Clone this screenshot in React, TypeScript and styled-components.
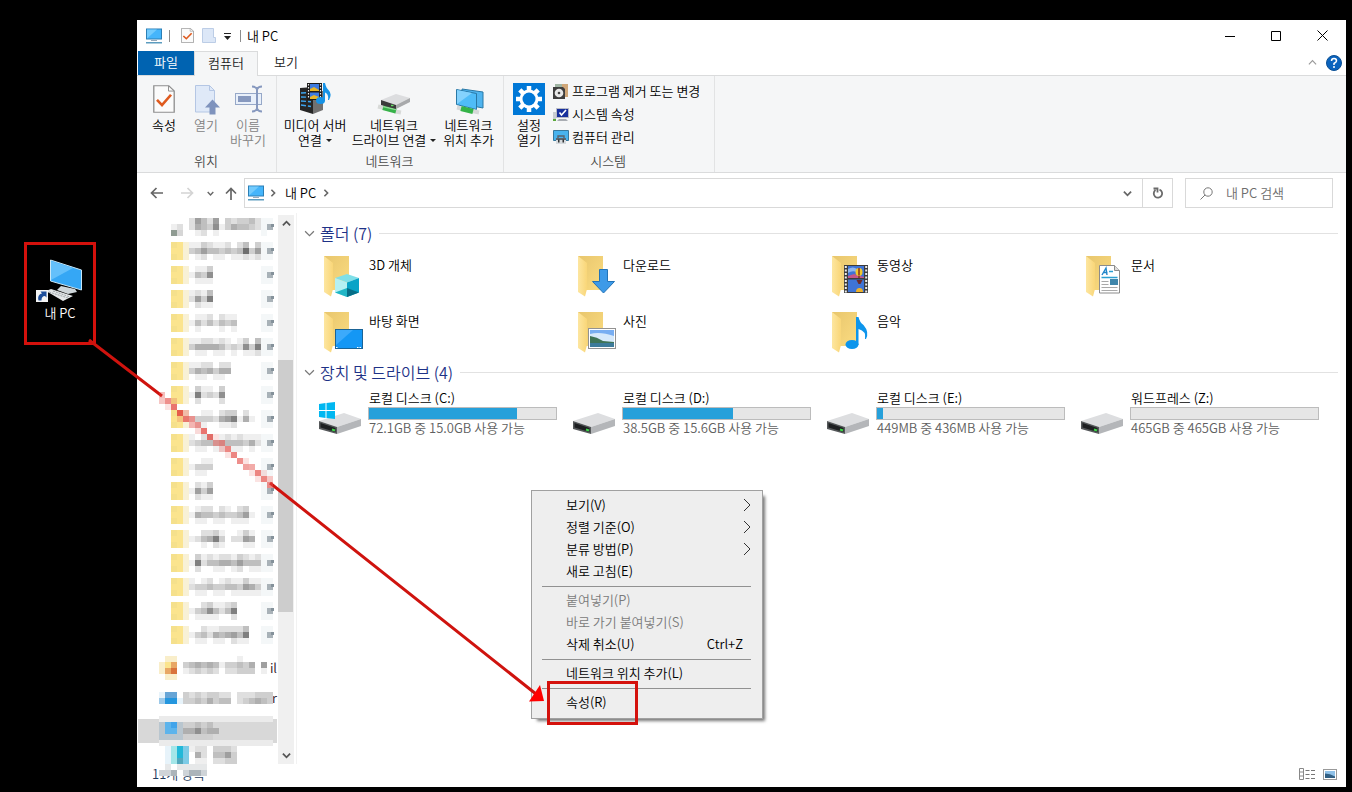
import React from 'react';
import styled, { createGlobalStyle } from 'styled-components';

const GlobalStyle = createGlobalStyle`
  * { box-sizing: border-box; }
  body {
    margin: 0;
    background: #000;
    color: #000;
    font: 350 13px/18px "Noto Sans CJK KR", "Noto Sans", sans-serif;
  }
  button, input { font: inherit; color: inherit; }
  button { border: 0; padding: 0; background: none; }
  ul { list-style: none; margin: 0; padding: 0; }
  svg { display: block; flex: none; }
`;

/* ---------- shell ---------- */

const Desktop = styled.div`
  position: relative;
  min-height: 100vh;
  display: flex;
  align-items: stretch;
  background: #000;
  overflow: hidden;
`;

const DesktopColumn = styled.div`
  width: 137px;
  flex: none;
  padding: 256px 17px 0 0;
`;

const Shortcut = styled.button`
  width: 100%;
  display: flex;
  flex-direction: column;
  align-items: center;
  color: #fff;
`;

const Explorer = styled.main`
  position: relative;
  flex: 1;
  min-width: 0;
  margin: 20px 6px 5px 0;
  display: flex;
  flex-direction: column;
  background: #fff;
`;

/* ---------- title bar ---------- */

const TitleBar = styled.header`
  height: 31px;
  display: flex;
  align-items: center;
  padding: 0 1px 0 8px;
`;

const QuickTools = styled.div`
  display: flex;
  align-items: center;
  gap: 8px;
`;

const Tick = styled.span<{ $last?: boolean }>`
  width: 1px;
  height: 12px;
  margin: 0 3px 0 ${p => (p.$last ? 1 : -2)}px;
  background: #8d8d8d;
`;

const Title = styled.h1`
  margin: 0 auto 0 3px;
  font-size: 13px;
  font-weight: 350;
`;

const WindowButton = styled.button`
  width: 46px;
  height: 30px;
  display: flex;
  align-items: center;
  justify-content: center;
`;

/* ---------- ribbon ---------- */

const TabRow = styled.nav`
  height: 25px;
  display: flex;
  align-items: center;
  padding: 0 4px 0 1px;
  box-shadow: inset 0 -1px #dadbdc;
`;

const Tab = styled.button<{ $kind: 'file' | 'active' | 'plain' }>`
  width: ${p => (p.$kind === 'active' ? 64 : 56)}px;
  height: ${p => (p.$kind === 'active' ? 25 : 24)}px;
  align-self: flex-start;
  padding-bottom: 3px;
  line-height: 20px;
  color: ${p => (p.$kind === 'file' ? '#fff' : '#222')};
  background: ${p => ({ file: '#0063b1', active: '#f5f6f7', plain: 'transparent' })[p.$kind]};
  border: solid #dadbdc;
  border-width: ${p => (p.$kind === 'active' ? '1px 1px 0' : '0')};
`;

const TabTools = styled.div`
  margin-left: auto;
  padding-bottom: 2px;
  display: flex;
  align-items: center;
  gap: 9px;
`;

const Ribbon = styled.section`
  height: 97px;
  display: flex;
  background: #f5f6f7;
  border-bottom: 1px solid #dadbdc;
`;

const Group = styled.div<{ $pad: string }>`
  display: grid;
  grid-template-rows: 1fr 22px;
  justify-items: center;
  padding: ${p => p.$pad};
  position: relative;
  border-right: 1px solid #e2e3e4;
`;

const GroupBody = styled.div`
  display: flex;
  align-items: flex-start;
`;

const GroupLabel = styled.span`
  line-height: 21px;
  color: #4a4a4a;
`;

const BigButton = styled.button<{ $width: number }>`
  width: ${p => p.$width}px;
  padding-top: 7px;
  display: flex;
  flex-direction: column;
  align-items: center;
  gap: 2px;
  line-height: 15px;
  white-space: nowrap;
  &:disabled { color: #838383; }
`;

const DropMark = styled.span`
  display: inline-block;
  margin-left: 4px;
  vertical-align: 3px;
  border: 3px solid transparent;
  border-top-color: #222;
  border-bottom: 0;
`;

const SmallList = styled.div`
  display: flex;
  flex-direction: column;
  padding-top: 3px;
`;

const SmallButton = styled.button`
  height: 23px;
  display: flex;
  align-items: center;
  gap: 3px;
  padding: 0 8px 0 3px;
  white-space: nowrap;
`;

/* ---------- address row ---------- */

const AddressRow = styled.div`
  height: 40px;
  display: flex;
  align-items: center;
  padding: 0 13px 0 5px;
`;

const NavButton = styled.button<{ $width: number }>`
  width: ${p => p.$width}px;
  height: 30px;
  display: flex;
  align-items: center;
  justify-content: center;
`;

const AddressBox = styled.div`
  flex: 1;
  height: 30px;
  display: flex;
  align-items: center;
  border: 1px solid #d9d9d9;
`;

const Crumb = styled.button<{ $root?: boolean }>`
  display: flex;
  align-items: center;
  gap: ${p => (p.$root ? 4 : 6)}px;
  margin-left: ${p => (p.$root ? 2 : 8)}px;
`;

const Spacer = styled.span`
  flex: 1;
`;

const BoxButton = styled.button<{ $split?: boolean }>`
  width: 30px;
  height: 28px;
  display: flex;
  align-items: center;
  justify-content: center;
  border-left: ${p => (p.$split ? '1px solid #d9d9d9' : '0')};
`;

const SearchBox = styled.label`
  width: 148px;
  height: 30px;
  margin-left: 12px;
  display: flex;
  align-items: center;
  gap: 13px;
  padding-left: 14px;
  border: 1px solid #d9d9d9;
  input {
    width: 100px;
    border: 0;
    padding: 0;
    outline: 0;
    background: none;
  }
  input::placeholder { color: #6d6d6d; opacity: 1; }
`;

/* ---------- content ---------- */

const Content = styled.div`
  flex: 1;
  display: flex;
  min-height: 0;
`;

const Tree = styled.ul`
  width: 141px;
  padding-top: 5px;
  overflow: hidden;
`;

const TreeRow = styled.li<{ $height: number; $selected?: boolean }>`
  height: ${p => p.$height}px;
  display: flex;
  align-items: flex-end;
  background: ${p => (p.$selected ? 'linear-gradient(#d8d8d8, #d8d8d8) 1px 15px / 139px 24px no-repeat' : 'none')};
  svg { position: relative; z-index: 1; }
`;

const TreeTail = styled.span<{ $line: number }>`
  width: 16px;
  margin-left: -16px;
  line-height: ${p => p.$line}px;
  text-align: right;
  color: #2b1424;
`;

const Scrollbar = styled.div`
  width: 16px;
  margin-top: 2px;
  display: grid;
  grid-template-rows: 17px 128fr 251fr 135fr 17px;
  background: #f0f0f0;
`;

const ScrollArrow = styled.button<{ $row: number }>`
  grid-row: ${p => p.$row};
  display: flex;
  align-items: center;
  justify-content: center;
`;

const Thumb = styled.div`
  grid-row: 3;
  width: 15px;
  background: #cdcdcd;
`;

const Pane = styled.section`
  position: relative;
  flex: 1;
  min-width: 0;
  margin-left: 2px;
  padding: 10px 8px 0 7px;
  border-left: 1px solid #f2f2f2;
`;

const SectionHead = styled.h2`
  margin: 0 0 6px;
  display: flex;
  align-items: center;
  gap: 5px;
  font-size: 16px;
  line-height: 20px;
  font-weight: 350;
  color: #1e3287;
  &::after {
    content: '';
    flex: 1;
    height: 1px;
    margin-left: 2px;
    background: #e2e2e2;
  }
`;

const Tiles = styled.ul`
  display: grid;
  grid-template-columns: repeat(auto-fill, 254px);
  padding-left: 11px;
  margin-bottom: 1px;
`;

const Tile = styled.li`
  height: 56px;
  display: flex;
  gap: 4px;
  padding-top: 2px;
  line-height: 27px;
`;

const Drive = styled.li`
  display: flex;
  gap: 3px;
`;

const DriveInfo = styled.div`
  width: 189px;
`;

const DriveName = styled.div`
  line-height: 19px;
  padding-left: 1px;
`;

const DriveMeta = styled(DriveName)`
  line-height: 15px;
  color: #5f5f5f;
  white-space: nowrap;
`;

const Meter = styled.div`
  height: 13px;
  border: 1px solid #bcbcbc;
  background: #e6e6e6;
`;

const MeterFill = styled.div`
  height: 100%;
  background: #26a0da;
`;

/* ---------- context menu ---------- */

const Menu = styled.div`
  position: absolute;
  left: 234px;
  top: 277px;
  width: 232px;
  padding: 3px 0 5px;
  background: #eee;
  border: 1px solid #a0a0a0;
  box-shadow: 4px 4px 3px -2px #777;
`;

const MenuItem = styled.button`
  width: 100%;
  height: 22px;
  display: flex;
  align-items: center;
  justify-content: space-between;
  padding: 0 19px 0 34px;
  &:disabled { color: #7a7a7a; }
`;

const MenuArrow = styled.svg`
  margin-right: -8px;
`;

const Divider = styled.hr`
  height: 1px;
  margin: 4px 11px 2px 10px;
  border: 0;
  background: #919191;
`;

/* ---------- status bar ---------- */

const StatusBar = styled.footer`
  height: 23px;
  display: flex;
  align-items: center;
  justify-content: space-between;
  padding: 0 9px 4px 15px;
  position: relative;
  color: #1e395b;
`;

const StatusMask = styled.svg`
  position: absolute;
  left: 22px;
  top: 0;
`;

const ViewModes = styled.div`
  display: flex;
  gap: 7px;
`;

const Annotation = styled.svg`
  position: absolute;
  left: 0;
  top: 0;
  z-index: 2;
  pointer-events: none;
`;

/* ---------- icons ---------- */

const PcIcon = () => (
  <svg width="18" height="16" viewBox="0 0 18 16">
    <rect x="1" y=".5" width="16" height="11" fill="#2c7fb5" />
    <rect x="2" y="1.500" width="14" height="9" fill="#45b5fb" />
    <path d="M2 10.500L12 1.500H2z" fill="#73cbfd" />
    <path d="M6 12h6v1H6z" fill="#9ab" />
    <path d="M1 14h16v1.500H1z" fill="#5c9cbf" />
  </svg>
);

const CheckDoc = ({ w, h }: { w: number; h: number }) => (
  <svg width={w} height={h} viewBox="0 0 22 30" preserveAspectRatio="none">
    <path d="M.8.8h15l5.400 5.500v22.900H.8z" fill="#fbfbfb" stroke="#8e8e8e" strokeWidth="1.300" />
    <path d="M15.500 1v5.500h5.500" fill="none" stroke="#8e8e8e" />
    <path d="M4 16l5 5.500 9-11" fill="none" stroke="#df5a1e" strokeWidth="2.600" />
  </svg>
);

const BlankDoc = () => (
  <svg width="14" height="15" viewBox="0 0 14 15">
    <path d="M.5.500h11v9h2v5H.5z" fill="#dce7f7" stroke="#bccde6" />
  </svg>
);

const Chevron = ({ d, size = 9, color = '#666', width = 1.6 }: { d: string; size?: number; color?: string; width?: number }) => (
  <svg width={size} height={size} viewBox="0 0 10 10" fill="none" stroke={color} strokeWidth={width}>
    <path d={d} />
  </svg>
);
const DOWN = 'M1 3l4 4 4-4';
const UP = 'M1 7l4-4 4 4';
const RIGHT = 'M3 1l4 4-4 4';

const OpenIcon = () => (
  <svg width="28" height="32" viewBox="0 0 28 32">
    <path d="M3.500 2.500h14l5 5V29h-19z" fill="#dfe9f8" stroke="#b4c6e4" />
    <path d="M17.500 2.500v5h5" fill="none" stroke="#b4c6e4" />
    <path d="M20.500 16.500l7.500 8h-4.500v7h-6v-7h-4.500z" fill="#7f93bd" />
  </svg>
);

const RenameIcon = () => (
  <svg width="30" height="32" viewBox="0 0 30 32" fill="none" stroke="#96a8c8">
    <rect x="2.500" y="10.500" width="26" height="11" fill="#e9f0fa" />
    <rect x="5" y="13" width="13" height="6" fill="#8799bf" stroke="none" />
    <path d="M24 4v24M19 3.500q4 0 5 3 1-3 5-3M19 28.500q4 0 5-3 1 3 5 3" strokeWidth="2" stroke="#8799bf" />
  </svg>
);

const MediaIcon = () => (
  <svg width="34" height="32" viewBox="0 0 34 32">
    <path d="M2 5l13-1v27L2 27z" fill="#262626" />
    <path d="M15 6l10 2v19l-10 4z" fill="#717171" />
    <path d="M3 10l10-.5M3 14l10 .2M3 18l10 .8M3 22l10 1.500" stroke="#3da5ef" strokeWidth="1.400" strokeDasharray="5 2" />
    <rect x="9" y="0" width="15" height="17" fill="#1b1b1b" />
    <path d="M12 1h9v7h-9zM12 9.500h9v6.500h-9z" fill="#3e7be0" />
    <path d="M12 6l4-2 5 3v1h-9zM12 14l4-2 5 2v2h-9z" fill="#e8b628" />
    <path d="M10.500 1v15M22.500 1v15" stroke="#eee" strokeWidth="1.200" strokeDasharray="1.500 1.500" />
    <ellipse cx="22.500" cy="17.500" rx="4.500" ry="3.500" fill="#1793e6" />
    <path d="M25 0h2q1 5 3.500 7 4 4 .5 10h-1q1-6-3-7.500V18h-2z" fill="#1793e6" />
  </svg>
);

const NetDriveIcon = () => (
  <svg width="34" height="32" viewBox="0 0 34 32">
    <path d="M1 23.500l6 1.500M18 28.500l6 1" stroke="#d8dad8" strokeWidth="4" />
    <path d="M6 24.500l13 3.500" stroke="#37b24a" strokeWidth="5" />
    <path d="M6 23.500l13 3" stroke="#8fdc96" strokeWidth="1.400" />
    <path d="M4 17L19 11l14 4-14 7z" fill="#dcdddf" />
    <path d="M4 17l15 5v4L4 22z" fill="#3b3b3b" />
    <path d="M19 22l14-7v4l-14 7z" fill="#a8a9ab" />
    <path d="M14 22.500h2.500" stroke="#67e067" strokeWidth="1.400" />
  </svg>
);

const NetPlaceIcon = () => (
  <svg width="30" height="32" viewBox="0 0 30 32">
    <path d="M8 6l21 3v16l-21-4z" fill="#4fb4ef" stroke="#2978a6" />
    <path d="M2.500 6.500l20 4v16l-20-5z" fill="#4fbcf8" stroke="#2978a6" />
    <path d="M3 21L18 10 3 7z" fill="#84d2fd" />
    <path d="M3 24.500l22 5" stroke="#d5d8d8" strokeWidth="4" />
    <path d="M7 25.500l12 3" stroke="#34b348" strokeWidth="5" />
  </svg>
);

const GearIcon = () => (
  <svg width="32" height="32" viewBox="0 0 32 32">
    <rect width="32" height="32" fill="#0078d7" />
    <g stroke="#fff" strokeWidth="4.500">
      <path d="M16 3v26M3 16h26M6.800 6.800l18.400 18.400M25.200 6.800L6.800 25.200" />
    </g>
    <circle cx="16" cy="16" r="9.500" fill="#fff" />
    <circle cx="16" cy="16" r="6.500" fill="#0078d7" />
  </svg>
);

const ProgramsIcon = () => (
  <svg width="16" height="16" viewBox="0 0 16 16">
    <path d="M2 1h12v12H2z" fill="#9fb4a3" />
    <path d="M9 1h6v13H9z" fill="#d0a779" />
    <path d="M0 4h10l2 2v10H0z" fill="#3e3e3e" />
    <circle cx="6" cy="10" r="4.300" fill="#e8e8e8" />
    <circle cx="6" cy="10" r="1.300" fill="#444" />
  </svg>
);

const SystemIcon = () => (
  <svg width="16" height="16" viewBox="0 0 16 16">
    <path d="M0 6h3v9H0z" fill="#c9cdd1" />
    <path d="M0 13h3v2H0z" fill="#5ba93c" />
    <path d="M3.500 2.500h12v9h-12z" fill="#18309c" stroke="#b9bcc6" />
    <path d="M6 13h7l2 2H4z" fill="#a9adb3" />
    <path d="M6.500 6.500l2 2.500L13 4" fill="none" stroke="#fff" strokeWidth="1.600" />
  </svg>
);

const ManageIcon = () => (
  <svg width="16" height="16" viewBox="0 0 16 16">
    <path d="M.5 1.500h15v10H.5z" fill="#48b3ee" stroke="#37789d" />
    <path d="M5 7h6v3H5z" fill="none" stroke="#59636c" strokeWidth="1.400" />
    <path d="M3 9h10v6H3z" fill="#5d6770" />
    <path d="M3 11h10v4H3z" fill="#d5dade" />
    <path d="M5 10.500h1.500v3H5zM9.500 10.500H11v3H9.500z" fill="#333" />
  </svg>
);

const Folder = ({ children }: { children?: React.ReactNode }) => (
  <svg width="50" height="50" viewBox="0 0 50 50">
    <defs>
      <linearGradient id="fold" x1="0" y1="0" x2="1" y2="1">
        <stop offset="0" stopColor="#e8c66d" />
        <stop offset="1" stopColor="#fbdc81" />
      </linearGradient>
      <linearGradient id="flap" x1="0" y1="0" x2="1" y2="0">
        <stop offset="0" stopColor="#fde6a0" />
        <stop offset="1" stopColor="#f9d678" />
      </linearGradient>
    </defs>
    <path d="M9 5h25v34H12z" fill="url(#fold)" />
    <path d="M9 5l9 7v26l-2 7.500L9 41z" fill="url(#flap)" />
    {children}
  </svg>
);

const folders: [string, React.ReactNode][] = [
  ['3D 개체', (
    <g>
      <path d="M32 23l12 4-12 4.500L20 27z" fill="#7fdfe8" />
      <path d="M20 27l12 4.500V46l-12-4.500z" fill="#b5f0f2" />
      <path d="M44 27l-12 4.500V46l12-4.500z" fill="#08a3c7" />
      <path d="M20 41.500l12-4.500v9z" fill="#21b6c6" />
      <path d="M44 41.500L32 37v9z" fill="#066e87" />
    </g>
  )],
  ['다운로드', <path d="M30.500 18.500h8v12h7L34.500 42l-11-11.500h7z" fill="#3d9ae8" stroke="#2374b8" />],
  ['동영상', (
    <g>
      <rect x="21" y="14" width="24" height="28" fill="#3c3c3c" />
      <path d="M25 15h16v12H25zM25 28.500h16V41H25z" fill="#3f74d6" />
      <path d="M25 18q5-3 9 0v3q-5-2-9 1z" fill="#8fb6ee" />
      <path d="M25 25l6-2 10 3v1H25z" fill="#c4568a" />
      <path d="M22.800 15v27M43.200 15v27" stroke="#eee" strokeWidth="2" strokeDasharray="2 1.500" />
      <ellipse cx="36" cy="21" rx="3.500" ry="4" fill="#f1c62c" />
      <path d="M36 17v7.500M35 26h2" stroke="#8b3a1c" strokeWidth="1.600" />
      <path d="M33.500 29h6l-2 4h-2z" fill="#6e2b2b" />
      <path d="M33 41a3.500 4 0 0 1 7 0z" fill="#efb22b" />
    </g>
  )],
  ['문서', (
    <g>
      <path d="M22.500 14.500h15l5 5V42h-20z" fill="#fff" stroke="#8b8b8b" />
      <path d="M37.500 14.500v5h5" fill="#ddd" stroke="#8b8b8b" />
      <path d="M25 24l4-7 1 7M26.500 21.500h4" fill="none" stroke="#1f85c9" strokeWidth="1.400" />
      <path d="M32 20.500h4M24.500 26.500h16" stroke="#2aa0d2" strokeWidth="1.300" />
      <path d="M24.500 30.500h7M24.500 33.500h7M24.500 36.500h16M24.500 39.500h16" stroke="#a9a9a9" />
      <path d="M33 28h8v6h-8z" fill="#3f86ab" />
    </g>
  )],
  ['바탕 화면', (
    <g>
      <rect x="20.500" y="22.500" width="27" height="19" fill="#1497f5" stroke="#1a6396" />
      <path d="M21 38L38 23H21z" fill="#3caafb" />
      <path d="M21 40.500h1.500M42 40.500h5" stroke="#fff" strokeDasharray="1.500 1" />
    </g>
  )],
  ['사진', (
    <g>
      <rect x="19.500" y="21.500" width="27" height="20" fill="#fff" stroke="#929292" />
      <path d="M21 23h24v17H21z" fill="#78aef2" />
      <path d="M21 27q10-3 24 2v6H21z" fill="#d6e9fb" />
      <path d="M21 29q7 1 13 5l11 1v1H21z" fill="#3f7457" />
      <path d="M21 36h24v4H21z" fill="#3d7b9a" />
    </g>
  )],
  ['음악', (
    <g>
      <ellipse cx="29" cy="37.500" rx="6.500" ry="4.500" fill="#0d95ec" />
      <path d="M33 10h2.500q1 5 5 8 6 7 2.500 14h-1q1.500-8-6.500-10v16H33z" fill="#0d95ec" />
    </g>
  )],
];

const DriveIcon = ({ system }: { system?: boolean }) => (
  <svg width="50" height="50" viewBox="0 0 50 50">
    <path d="M4 33l25-8 17 6-24 8z" fill="#dddee0" />
    <path d="M4 33l18 6v7L4 41z" fill="#55585a" />
    <path d="M5.500 35l15 5v4L5.500 39.500z" fill="#1d1f21" />
    <path d="M22 39l24-8v7l-24 8z" fill="#b4b6b9" />
    <path d="M17 41.500l3 1" stroke="#3fd64a" strokeWidth="2" />
    {system && (
      <path d="M4 16l6.500-1v7H4zM11.500 15l8.500-1v8h-8.500zM4 23h6.500v7L4 29zM11.500 23H20v8l-8.500-1z" fill="#00b7f1" />
    )}
  </svg>
);

const drives = [
  { name: '로컬 디스크 (C:)', meta: '72.1GB 중 15.0GB 사용 가능', used: 79, system: true },
  { name: '로컬 디스크 (D:)', meta: '38.5GB 중 15.6GB 사용 가능', used: 59 },
  { name: '로컬 디스크 (E:)', meta: '449MB 중 436MB 사용 가능', used: 3 },
  { name: '워드프레스 (Z:)', meta: '465GB 중 465GB 사용 가능', used: 0 },
];

/* ---------- pixelated tree labels ---------- */

const CELL = 6;
const tones: Record<string, string> = {
  a: '#f5e08c', b: '#fbe48e', c: '#f8f1d6', p: '#f4f7f8', q: '#a9b2b8',
  o: '#e8a765', r: '#d9733c', t: '#f9eeca', u: '#9cc9e9', v: '#2496de', w: '#67a5d6',
  s: '#5cb4ec', x: '#41a4ea', y: '#e7f3fa', z: '#ebebeb',
  A: '#a4e6e8', B: '#22b8d8', C: '#7dcbe6', D: '#53a8bd', E: '#d6d6d6', F: '#8f9b92',
  G: '#b9c6cf', H: '#d0d0d0',
};
const tone = (ch: string) => {
  if (ch in tones) return tones[ch];
  const g = 255 - Number(ch) * 16;
  return `rgb(${g},${g},${g})`;
};

const Mosaic = ({ rows, left = 22 }: { rows: string[]; left?: number }) => (
  <svg width="140" height={rows.length * CELL} shapeRendering="crispEdges">
    {rows.map((row, y) =>
      [...row].map((ch, x) =>
        ch === ' ' ? null : (
          <rect
            key={`${x}-${y}`}
            x={left + x * CELL}
            y={y * CELL}
            width={Math.min(CELL, 136 - left - x * CELL)}
            height={CELL}
            fill={tone(ch)}
          />
        ),
      ),
    )}
    {rows.length === 3 && left === 34 && <path d="M134 6h3v3h-3z" fill="#85929b" />}
  </svg>
);

const labels = [
  '254371354432', '346443434936', '143700000000', '263800000000', '142424340000', '355554232738',
  '354535500000', '182327000000', '133325681510', '234433444352', '133300000000', '163600000000',
  '154434334610', '124583022650', '182445546444', '233433443653', '134742480000', '134254564800',
];

const fade = (label: string, cut: number) =>
  [...label].map((ch, i) => Math.max(0, Math.floor(Number(ch) / cut) - ((i + cut) % 3 === 0 ? 1 : 0))).join('');

const labelRows = (label: string, i: number) =>
  i === 0
    ? ['   264260323342pp', '120' + label + 'pq', 'FE0012010000000p']
    : ['abc' + fade(label, 2) + 'pp', 'bbc' + label + 'pq', 'abc' + fade(label, 3) + 'pp'];

const redCells: [number, number, number][] = [
  [0, 0, 0.35], [0, 1, 0.3], [1, 1, 0.6], [2, 1, 0.2], [1, 2, 0.15], [2, 2, 0.75], [3, 3, 0.85], [4, 3, 0.3],
  [3, 4, 0.2], [4, 4, 0.7], [5, 4, 0.55], [5, 5, 0.4], [6, 5, 0.55], [6, 6, 0.2], [7, 6, 0.75], [8, 7, 0.75],
  [9, 7, 0.15], [9, 8, 0.45], [10, 8, 0.55], [10, 9, 0.25], [11, 9, 0.65], [12, 10, 0.65], [11, 10, 0.15],
  [13, 11, 0.6], [14, 11, 0.15], [14, 12, 0.5], [15, 12, 0.45], [15, 13, 0.15], [16, 13, 0.65], [17, 13, 0.15],
  [17, 14, 0.65], [16, 14, 0.15], [18, 14, 0.3], [18, 15, 0.6],
];

const menu: ({ text: string; sub?: boolean; keys?: string; off?: boolean } | null)[] = [
  { text: '보기(V)', sub: true },
  { text: '정렬 기준(O)', sub: true },
  { text: '분류 방법(P)', sub: true },
  { text: '새로 고침(E)' },
  null,
  { text: '붙여넣기(P)', off: true },
  { text: '바로 가기 붙여넣기(S)', off: true },
  { text: '삭제 취소(U)', keys: 'Ctrl+Z' },
  null,
  { text: '네트워크 위치 추가(L)' },
  null,
  { text: '속성(R)' },
];

export default function App() {
  return (
    <Desktop>
      <GlobalStyle />
      <DesktopColumn>
        <Shortcut>
          <svg width="50" height="48" viewBox="0 0 50 48">
            <path d="M15.500 4l31 10v20l-31-9z" fill="#35a7f5" stroke="#c7e6f7" />
            <path d="M16 24L38 12 16 5z" fill="#64c0fb" />
            <path d="M26 30l14 3 2 3-9 2-11-4z" fill="#cfd6da" />
            <path d="M11 35l5-2 22 7-10 5z" fill="#e3e6e8" />
            <path d="M14 36l19 6M18 35l17 6" stroke="#9fa6aa" strokeDasharray="2 1" />
            <rect x="1" y="34" width="12" height="12" fill="#f4f4f4" />
            <path d="M3.500 44.500c-1-4 .5-6.500 3.500-7l-1.500-2h6v6L10 40c-2.500 0-3.500 1.500-3.500 4.500z" fill="#1d4e9c" />
          </svg>
          <span>내 PC</span>
        </Shortcut>
      </DesktopColumn>

      <Explorer>
        <TitleBar>
          <QuickTools>
            <PcIcon />
            <Tick />
            <CheckDoc w={13} h={15} />
            <BlankDoc />
            <svg width="7" height="8" viewBox="0 0 7 8"><path d="M0 1.500h7" stroke="#222" /><path d="M0 4h7L3.500 8z" fill="#222" /></svg>
            <Tick $last />
          </QuickTools>
          <Title>내 PC</Title>
          <WindowButton aria-label="최소화"><svg width="10" height="10"><path d="M0 5.500h10" stroke="#000" /></svg></WindowButton>
          <WindowButton aria-label="최대화"><svg width="10" height="10"><path d="M.5.500h9v9h-9z" fill="none" stroke="#000" /></svg></WindowButton>
          <WindowButton aria-label="닫기"><svg width="11" height="11"><path d="M.5.500l10 10M10.500.500l-10 10" stroke="#000" /></svg></WindowButton>
        </TitleBar>

        <TabRow>
          <Tab $kind="file">파일</Tab>
          <Tab $kind="active">컴퓨터</Tab>
          <Tab $kind="plain">보기</Tab>
          <TabTools>
            <Chevron d={UP} color="#999" width={1.3} />
            <svg width="16" height="16" viewBox="0 0 16 16">
              <circle cx="8" cy="8" r="7.500" fill="#0a63bd" stroke="#0b4f94" />
              <path d="M5.500 6q0-2.500 2.500-2.500T10.500 6Q10.500 7 8 8.500V10" fill="none" stroke="#fff" strokeWidth="1.500" />
              <circle cx="8" cy="12" r="1" fill="#fff" />
            </svg>
          </TabTools>
        </TabRow>

        <Ribbon>
          <Group $pad="0 7px 0 6px">
            <GroupBody>
              <BigButton $width={42}>
                <svg width="22" height="32" viewBox="0 0 22 32"><svg y="2" width="22" height="28"><CheckDoc w={22} h={28} /></svg></svg>
                속성
              </BigButton>
              <BigButton $width={42} disabled><OpenIcon />열기</BigButton>
              <BigButton $width={42} disabled><RenameIcon /><span>이름<br />바꾸기</span></BigButton>
            </GroupBody>
            <GroupLabel>위치</GroupLabel>
          </Group>
          <Group $pad="0 4px 0 3px">
            <GroupBody>
              <BigButton $width={70}><MediaIcon /><span>미디어 서버<br />연결<DropMark /></span></BigButton>
              <BigButton $width={88}><NetDriveIcon /><span>네트워크<br />드라이브 연결<DropMark /></span></BigButton>
              <BigButton $width={61}><NetPlaceIcon /><span>네트워크<br />위치 추가</span></BigButton>
            </GroupBody>
            <GroupLabel>네트워크</GroupLabel>
          </Group>
          <Group $pad="0 6px 0 4px">
            <GroupBody>
              <BigButton $width={42}><GearIcon /><span>설정<br />열기</span></BigButton>
              <SmallList>
                <SmallButton><ProgramsIcon />프로그램 제거 또는 변경</SmallButton>
                <SmallButton><SystemIcon />시스템 속성</SmallButton>
                <SmallButton><ManageIcon />컴퓨터 관리</SmallButton>
              </SmallList>
            </GroupBody>
            <GroupLabel>시스템</GroupLabel>
          </Group>
        </Ribbon>

        <AddressRow>
          <NavButton $width={30} aria-label="뒤로"><svg width="14" height="12" viewBox="0 0 14 12" fill="none" stroke="#666" strokeWidth="1.700"><path d="M13 6H2M6.500 1l-5 5 5 5" /></svg></NavButton>
          <NavButton $width={30} aria-label="앞으로"><svg width="14" height="12" viewBox="0 0 14 12" fill="none" stroke="#d4d4d4" strokeWidth="1.700"><path d="M1 6h11M7.500 1l5 5-5 5" /></svg></NavButton>
          <NavButton $width={16} aria-label="최근 위치"><Chevron d={DOWN} size={7} width={2} /></NavButton>
          <NavButton $width={26} aria-label="위로"><svg width="12" height="13" viewBox="0 0 12 13" fill="none" stroke="#666" strokeWidth="1.700"><path d="M6 13V2M1 6.500l5-5 5 5" /></svg></NavButton>
          <AddressBox>
            <Crumb $root aria-label="위치"><PcIcon /><Chevron d={RIGHT} size={8} width={2} /></Crumb>
            <Crumb>내 PC<Chevron d={RIGHT} size={8} width={2} /></Crumb>
            <Spacer />
            <BoxButton aria-label="이전 위치"><Chevron d={DOWN} width={2} /></BoxButton>
            <BoxButton $split aria-label="새로 고침">
              <svg width="12" height="12" viewBox="0 0 12 12" fill="none" stroke="#6a6a6a" strokeWidth="1.800"><path d="M7.500 2.600a4.200 4.200 0 1 1-4 .5M1.500 1.500h4v4" /></svg>
            </BoxButton>
          </AddressBox>
          <SearchBox>
            <svg width="13" height="13" viewBox="0 0 13 13" fill="none" stroke="#777"><circle cx="8" cy="5" r="4.200" /><path d="M5 8L.5 12.500" /></svg>
            <input type="text" placeholder="내 PC 검색" aria-label="내 PC 검색" />
          </SearchBox>
        </AddressRow>

        <Content>
          <Tree>
            {labels.map((label, i) => (
              <TreeRow key={i} $height={24}>
                <svg width="140" height="24"><Mosaic rows={labelRows(label, i)} left={34} /></svg>
              </TreeRow>
            ))}
            <TreeRow $height={30}>
              <Mosaic rows={[' tt          1 0 0', 'tbo 345454133435 6', 'tor 123232022333 1', ' tt               ']} />
              <TreeTail $line={24}>il</TreeTail>
            </TreeRow>
            <TreeRow $height={24}>
              <Mosaic rows={['yww 323233220222333', 'uvvy334353440234543']} />
              <TreeTail $line={12}>or</TreeTail>
            </TreeRow>
            <TreeRow $height={42} $selected>
              <Mosaic rows={['zzzzzzzzzzzzzzzzzzz', 'GsxG33434', 'GssG557455', 'GGGGHH33H', 'zzzzzzzzzzzzzzzzzzz']} />
            </TreeRow>
            <TreeRow $height={18}>
              <Mosaic rows={['0yABC122 3332', '0yABC052 4463', '0yADC011 2233']} />
            </TreeRow>
          </Tree>
          <Scrollbar>
            <ScrollArrow $row={1} aria-label="위로 스크롤"><Chevron d={UP} width={2} color="#555" /></ScrollArrow>
            <Thumb />
            <ScrollArrow $row={5} aria-label="아래로 스크롤"><Chevron d={DOWN} width={2} color="#555" /></ScrollArrow>
          </Scrollbar>

          <Pane>
            <SectionHead><Chevron d={DOWN} size={11} color="#777" width={1.1} />폴더 (7)</SectionHead>
            <Tiles>
              {folders.map(([name, art]) => (
                <Tile key={name}><Folder>{art}</Folder>{name}</Tile>
              ))}
            </Tiles>
            <SectionHead><Chevron d={DOWN} size={11} color="#777" width={1.1} />장치 및 드라이브 (4)</SectionHead>
            <Tiles>
              {drives.map(d => (
                <Drive key={d.name}>
                  <DriveIcon system={d.system} />
                  <DriveInfo>
                    <DriveName>{d.name}</DriveName>
                    <Meter><MeterFill style={{ width: `${d.used}%` }} /></Meter>
                    <DriveMeta>{d.meta}</DriveMeta>
                  </DriveInfo>
                </Drive>
              ))}
            </Tiles>

            <Menu>
              {menu.map((m, i) =>
                m ? (
                  <MenuItem key={i} disabled={m.off}>
                    {m.text}
                    {m.keys && <span>{m.keys}</span>}
                    {m.sub && (
                      <MenuArrow width="8" height="14" fill="none" stroke="#333"><path d="M1 1l6 6-6 6" /></MenuArrow>
                    )}
                  </MenuItem>
                ) : (
                  <Divider key={i} />
                ),
              )}
            </Menu>
          </Pane>
        </Content>

        <StatusBar>
          <span>11개 항목</span>
          <StatusMask width="60" height="12" shapeRendering="crispEdges">
            <path d="M0 0h60v12H0z" fill="#fff" />
            <path d="M6 0h6v6H6zM18 0h6v6h-6zM24 0h24v6H24z" fill="#e6e8e9" />
            <path d="M0 6h6v6H0zM6 6h6v6H6zM24 6h24v6H24z" fill="#cfd4d8" />
            <path d="M12 6h6v6h-6zM30 6h6v6h-6zM36 6h6v6h-6z" fill="#acb4ba" />
          </StatusMask>
          <ViewModes>
            <svg width="17" height="14" viewBox="0 0 17 14" fill="none" stroke="#888">
              <path d="M.5 1.500h4v11h-4zM.5 5h4M.5 9h4" />
              <path d="M6.500 3.500h4M12 3.500h4M6.500 7.500h4M12 7.500h4M6.500 11.500h4M12 11.500h4" stroke="#777" />
            </svg>
            <svg width="14" height="14" viewBox="0 0 14 14">
              <rect x=".5" y="2.500" width="13" height="10" fill="#fff" stroke="#999" />
              <path d="M2 4h10v7H2z" fill="#8fc1e8" />
              <path d="M2 6.500q5 0 10 3V11H2z" fill="#315f83" />
            </svg>
          </ViewModes>
        </StatusBar>
      </Explorer>

      <Annotation width="1352" height="792" fill="none" stroke="#d4110c" strokeWidth="3">
        <rect x="25.500" y="243.500" width="69" height="100" />
        <rect x="548.500" y="682.500" width="88" height="41" />
        <path d="M89 340L162 396M270 483L536 694" stroke="#cf130e" />
        <path d="M544 701l-15 .5L540 685z" fill="#f00" stroke="none" />
        <g fill="#e2453f" stroke="none" shapeRendering="crispEdges">
          {redCells.map(([x, y, o]) => (
            <rect key={`${x}-${y}`} x={159 + x * CELL} y={392 + y * CELL} width="6" height="6" fillOpacity={o} />
          ))}
        </g>
      </Annotation>
    </Desktop>
  );
}
